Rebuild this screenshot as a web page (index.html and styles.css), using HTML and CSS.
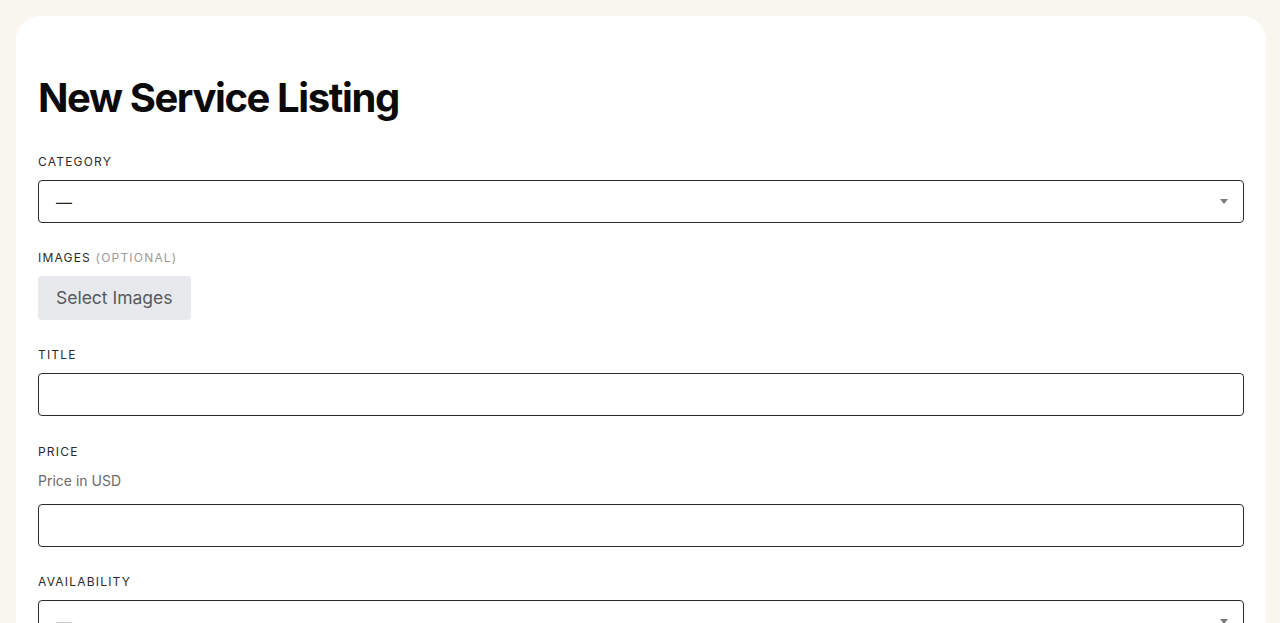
FILE: index.html
```html
<!DOCTYPE html>
<html lang="en">
<head>
<meta charset="utf-8">
<title>New Service Listing</title>
<link rel="stylesheet" href="styles.css">
</head>
<body>
<main class="card">
  <h1 class="page-title">New Service Listing</h1>

  <div class="field">
    <label class="label">Category</label>
    <div class="select">
      <span class="select-value">—</span>
      <span class="caret"></span>
    </div>
  </div>

  <div class="field">
    <label class="label">Images <span class="optional">(optional)</span></label>
    <button class="btn-secondary" type="button">Select Images</button>
  </div>

  <div class="field">
    <label class="label">Title</label>
    <div class="input"></div>
  </div>

  <div class="field">
    <label class="label label-price">Price</label>
    <p class="help">Price in USD</p>
    <div class="input"></div>
  </div>

  <div class="field">
    <label class="label">Availability</label>
    <div class="select">
      <span class="select-value">—</span>
      <span class="caret"></span>
    </div>
  </div>
</main>
</body>
</html>
```
FILE: styles.css
```css
html, body {
  margin: 0;
  padding: 0;
  background: #f9f6f0;
  font-family: Inter, "Noto Sans", Arial, sans-serif;
  color: #111;
}

body {
  padding: 16px 14px 0 16px;
  height: 623px;
  overflow: hidden;
  box-sizing: border-box;
}

.card {
  background: #ffffff;
  border-radius: 24px 24px 0 0;
  padding: 58px 22px 40px 22px;
  min-height: 800px;
}

.page-title {
  margin: 0 0 32px 0;
  font-size: 40px;
  line-height: 48px;
  font-weight: 700;
  letter-spacing: -0.035em;
  color: #0a0a0a;
}

.field {
  margin-bottom: 27px;
}

.label {
  display: block;
  font-size: 12px;
  line-height: 16px;
  letter-spacing: 0.1em;
  text-transform: uppercase;
  color: #2a2a2a;
  margin-bottom: 10px;
}

.label-price {
  padding-top: 1px;
}

.optional {
  color: #9a9a9a;
}

.help {
  margin: 12px 0 14px 0;
  font-size: 14px;
  line-height: 18px;
  color: #6b6b6b;
}

.select,
.input {
  box-sizing: border-box;
  height: 43px;
  border: 1px solid #2b2b2b;
  border-radius: 4px;
  background: #fff;
  display: flex;
  align-items: center;
  justify-content: space-between;
  padding: 0 15px 0 17px;
}

.select-value {
  font-size: 16px;
  color: #222;
}

.caret {
  width: 0;
  height: 0;
  border-left: 4.5px solid transparent;
  border-right: 4.5px solid transparent;
  border-top: 5px solid #7a7a7a;
}

.btn-secondary {
  display: block;
  font-family: inherit;
  font-size: 17.5px;
  line-height: 20px;
  color: #555a60;
  background: #e8e9ed;
  border: none;
  border-radius: 4px;
  padding: 12px 18px;
  height: 44px;
  cursor: pointer;
}
```
